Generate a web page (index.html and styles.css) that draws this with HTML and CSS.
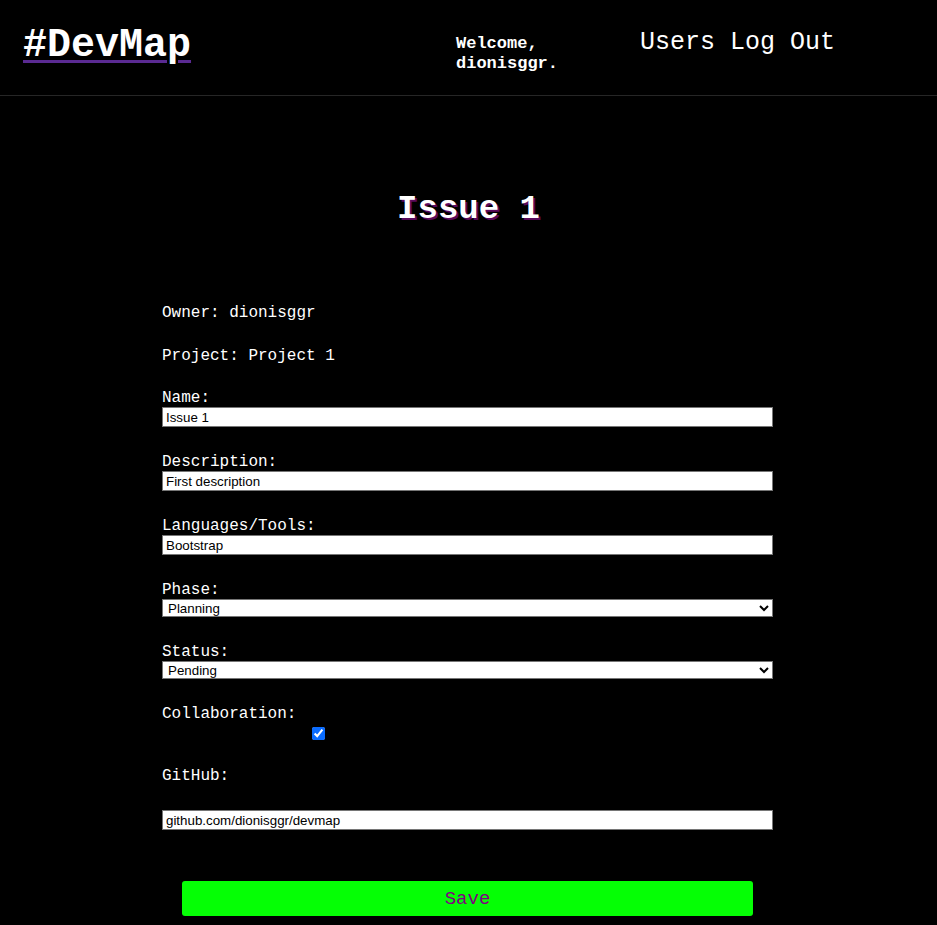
FILE: index.html
```html
<!DOCTYPE html>
<html>
<head>
<meta charset="utf-8">
<title>#DevMap</title>
<link rel="stylesheet" href="styles.css">
</head>
<body>
<header class="site-header">
  <a class="logo" href="#">#DevMap</a>
  <div class="welcome">Welcome,<br>dionisggr.</div>
  <nav class="nav">
    <a href="#">Users</a>
    <a href="#">Log Out</a>
  </nav>
</header>
<main class="main">
  <h1 class="title">Issue 1</h1>
  <form class="issue-form">
    <p class="info">Owner: dionisggr</p>
    <p class="info">Project: Project 1</p>
    <div class="field">
      <label>Name:</label>
      <input class="text" type="text" value="Issue 1">
    </div>
    <div class="field">
      <label>Description:</label>
      <input class="text" type="text" value="First description">
    </div>
    <div class="field">
      <label>Languages/Tools:</label>
      <input class="text" type="text" value="Bootstrap">
    </div>
    <div class="field">
      <label>Phase:</label>
      <select class="select"><option>Planning</option></select>
    </div>
    <div class="field">
      <label>Status:</label>
      <select class="select"><option>Pending</option></select>
    </div>
    <div class="field">
      <label>Collaboration:</label>
      <div class="check-row"><input class="check" type="checkbox" checked></div>
    </div>
    <div class="field">
      <label class="gh-label">GitHub:</label>
      <input class="text" type="text" value="github.com/dionisggr/devmap">
    </div>
    <button class="save" type="button">Save</button>
  </form>
</main>
</body>
</html>
```
FILE: styles.css
```css
html, body {
  margin: 0;
  padding: 0;
  background: #000;
}
body {
  font-family: "Liberation Mono", "Courier New", monospace;
  color: #fff;
  width: 937px;
}
.site-header {
  display: grid;
  grid-template-columns: 433px 184px auto;
  height: 95px;
  padding-left: 23px;
  border-bottom: 1px solid #262626;
  box-sizing: content-box;
}
.logo {
  font-size: 40px;
  font-weight: bold;
  color: #fff;
  line-height: 46px;
  margin-top: 23px;
  align-self: start;
  justify-self: start;
  text-decoration: underline;
  text-decoration-color: #5a2a92;
  text-decoration-thickness: 3px;
  text-underline-offset: 4px;
}
.welcome {
  font-size: 17px;
  font-weight: bold;
  line-height: 20px;
  margin-top: 34px;
}
.nav {
  display: flex;
  gap: 15px;
  margin-top: 29px;
  font-size: 25px;
  line-height: 28px;
  align-self: start;
}
.nav a {
  color: #fff;
  text-decoration: none;
}
.main {
  padding-top: 94px;
}
.title {
  margin: 0;
  text-align: center;
  font-size: 34px;
  line-height: 38px;
  font-weight: bold;
  text-shadow: 2px 2px 0 #5a0a5c;
}
.issue-form {
  width: 611px;
  margin: 75px 0 0 162px;
  font-size: 16px;
}
.info {
  margin: 0 0 25px;
  padding-top: 1px;
  line-height: 18px;
}
.info + .info {
  padding-top: 0;
  margin-bottom: 24px;
}
.field {
  margin-bottom: 26px;
}
.field label {
  display: block;
  line-height: 18px;
  margin-bottom: 0;
}
.field .gh-label {
  margin-bottom: 25px;
}
.text {
  display: block;
  width: 100%;
  box-sizing: border-box;
  height: 20px;
  margin: 0;
  padding: 1px 3px;
  border: 1px solid #767676;
  border-radius: 0;
  font-family: "Liberation Sans", Arial, sans-serif;
  font-size: 13.333px;
  color: #000;
  background: #fff;
}
.select {
  display: block;
  width: 100%;
  box-sizing: border-box;
  height: 18px;
  margin: 0;
  padding: 0 1px;
  border: 1px solid #767676;
  border-radius: 0;
  font-family: "Liberation Sans", Arial, sans-serif;
  font-size: 13.333px;
  color: #000;
  background: #fff;
}
.check-row {
  padding-left: 146px;
  height: 18px;
}
.check {
  margin: 4px 0 0 4px;
  width: 13px;
  height: 13px;
  accent-color: #0a6cff;
}
.save {
  display: block;
  width: 571px;
  height: 35px;
  margin: 51px 0 0 20px;
  border: none;
  border-radius: 3px;
  background: #05ff05;
  color: #800080;
  font-family: "Liberation Mono", "Courier New", monospace;
  font-size: 19px;
}
```
